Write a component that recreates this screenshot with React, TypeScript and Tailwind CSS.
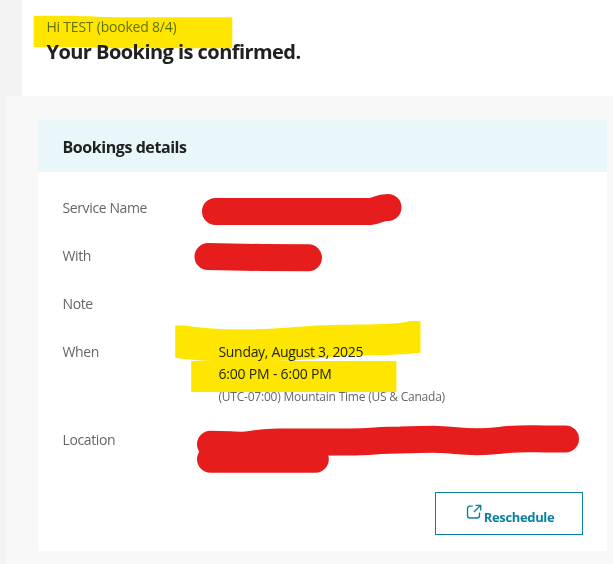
import type { ReactNode } from 'react';

interface DetailRowProps {
  label: string;
  className: string;
  children?: ReactNode;
}

function DetailRow({ label, className, children }: DetailRowProps) {
  return (
    <div className={`flex ${className}`}>
      <div className="w-[156px] shrink-0 text-[14px] leading-[22px] tracking-[-0.38px] text-[#666666]">{label}</div>
      <div className="flex-1">{children}</div>
    </div>
  );
}

// Hand-drawn highlighter and redaction strokes over the message
function Markup() {
  return (
    <svg
      className="absolute inset-0 mix-blend-multiply pointer-events-none"
      width="613"
      height="564"
      viewBox="0 0 613 564"
      fill="none"
    >
      <g fill="#ffe600">
        <path d="M33.6 15.8H72C88 16.2 98 17.2 115 17.2H232.3V48.3H125C95 48.2 78 47 65 47H33.6Z" />
        <path d="M175.2 325.4H185C210 329.4 240 330.2 275 328.5C305 326.5 315 325 345 324.8C380 324.3 398 324.3 410 321H420.5V352.8C400 355.2 375 355.2 350 355.5C320 358 300 360.8 275 361H220C200 361 189 359.5 175.2 357.8Z" />
        <path d="M191.2 361H396.4V392H191.2Z" />
      </g>
      <g stroke="#e71d1d" strokeWidth="27" strokeLinecap="round" strokeLinejoin="round">
        <path d="M215.5 211.4H371C378 210.5 379 207.4 388 207.4" />
        <path d="M208 256.6L262 257.5L308.5 257.7" />
        <path d="M210.5 444.2C225 444.2 235 445.3 243 445.2C255 444.5 262 441.9 278 441.9H350C370 441.8 380 440 400 440C440 438.8 445 439.4 456 440.6C473 442.3 483 442.3 500 440.3C520 438 530 438.9 545 438.9H565.5" />
        <path d="M210.5 459.2H315.3" />
      </g>
    </svg>
  );
}

export default function App() {
  return (
    <div className="relative isolate h-[564px] w-[613px] overflow-hidden bg-[#f3f3f3] font-['Open_Sans','Noto_Sans',sans-serif]">
      {/* Greeting */}
      <header className="ml-[22px] h-24 bg-white pl-[24.5px] pt-4">
        <p className="text-[14px] leading-[22px] tracking-[-0.22px] text-[#627c66]">Hi TEST (booked 8/4)</p>
        <h1 className="text-[20px] leading-7 font-bold tracking-[-0.55px] text-[#212121]">
          Your Booking is confirmed.
        </h1>
      </header>

      <main className="ml-1.5 h-[468px] bg-[#f8f8f8] pl-8 pr-1.5 pt-6">
        {/* Booking card */}
        <section className="h-[431px] bg-white">
          <h2 className="flex h-[52px] items-center bg-[#e9f7fb] px-[24.5px] pt-0.5 text-[16px] font-bold tracking-[-0.43px] text-[#212121]">
            Bookings details
          </h2>
          <div className="pt-[25px] pr-6 pl-[24.5px]">
            <DetailRow label="Service Name" className="h-12" />
            <DetailRow label="With" className="h-12" />
            <DetailRow label="Note" className="h-12" />
            <DetailRow label="When" className="h-[88px]">
              <p className="text-[14px] leading-[22px] tracking-[-0.32px] text-[#212c21]">Sunday, August 3, 2025</p>
              <p className="text-[14px] leading-[22px] tracking-[-0.2px] text-[#212c21]">6:00 PM - 6:00 PM</p>
              <p className="text-[12px] leading-6 tracking-[-0.22px] text-[#666666]">
                (UTC-07:00) Mountain Time (US &amp; Canada)
              </p>
            </DetailRow>
            <DetailRow label="Location" className="h-[63px]" />
            <button className="ml-auto flex h-[43px] w-[148px] justify-center border border-[#0b819c] pt-[11px] pl-0.5 text-[#0b819c]">
              <svg className="mr-0.5 size-4" viewBox="0 0 16 16" fill="none" stroke="currentColor" strokeWidth="1.35">
                <path d="M6.8 2.1H4A2.5 2.5 0 0 0 1.5 4.6V11.5A2.5 2.5 0 0 0 4 14H11A2.5 2.5 0 0 0 13.5 11.5V8.5" />
                <path d="M9.5 1.3H14.7V6.5M14.7 1.3L8 8" />
              </svg>
              <span className="pt-0.5 text-[13px] leading-[22px] font-bold tracking-[-0.35px]">Reschedule</span>
            </button>
          </div>
        </section>
      </main>

      <Markup />
    </div>
  );
}
